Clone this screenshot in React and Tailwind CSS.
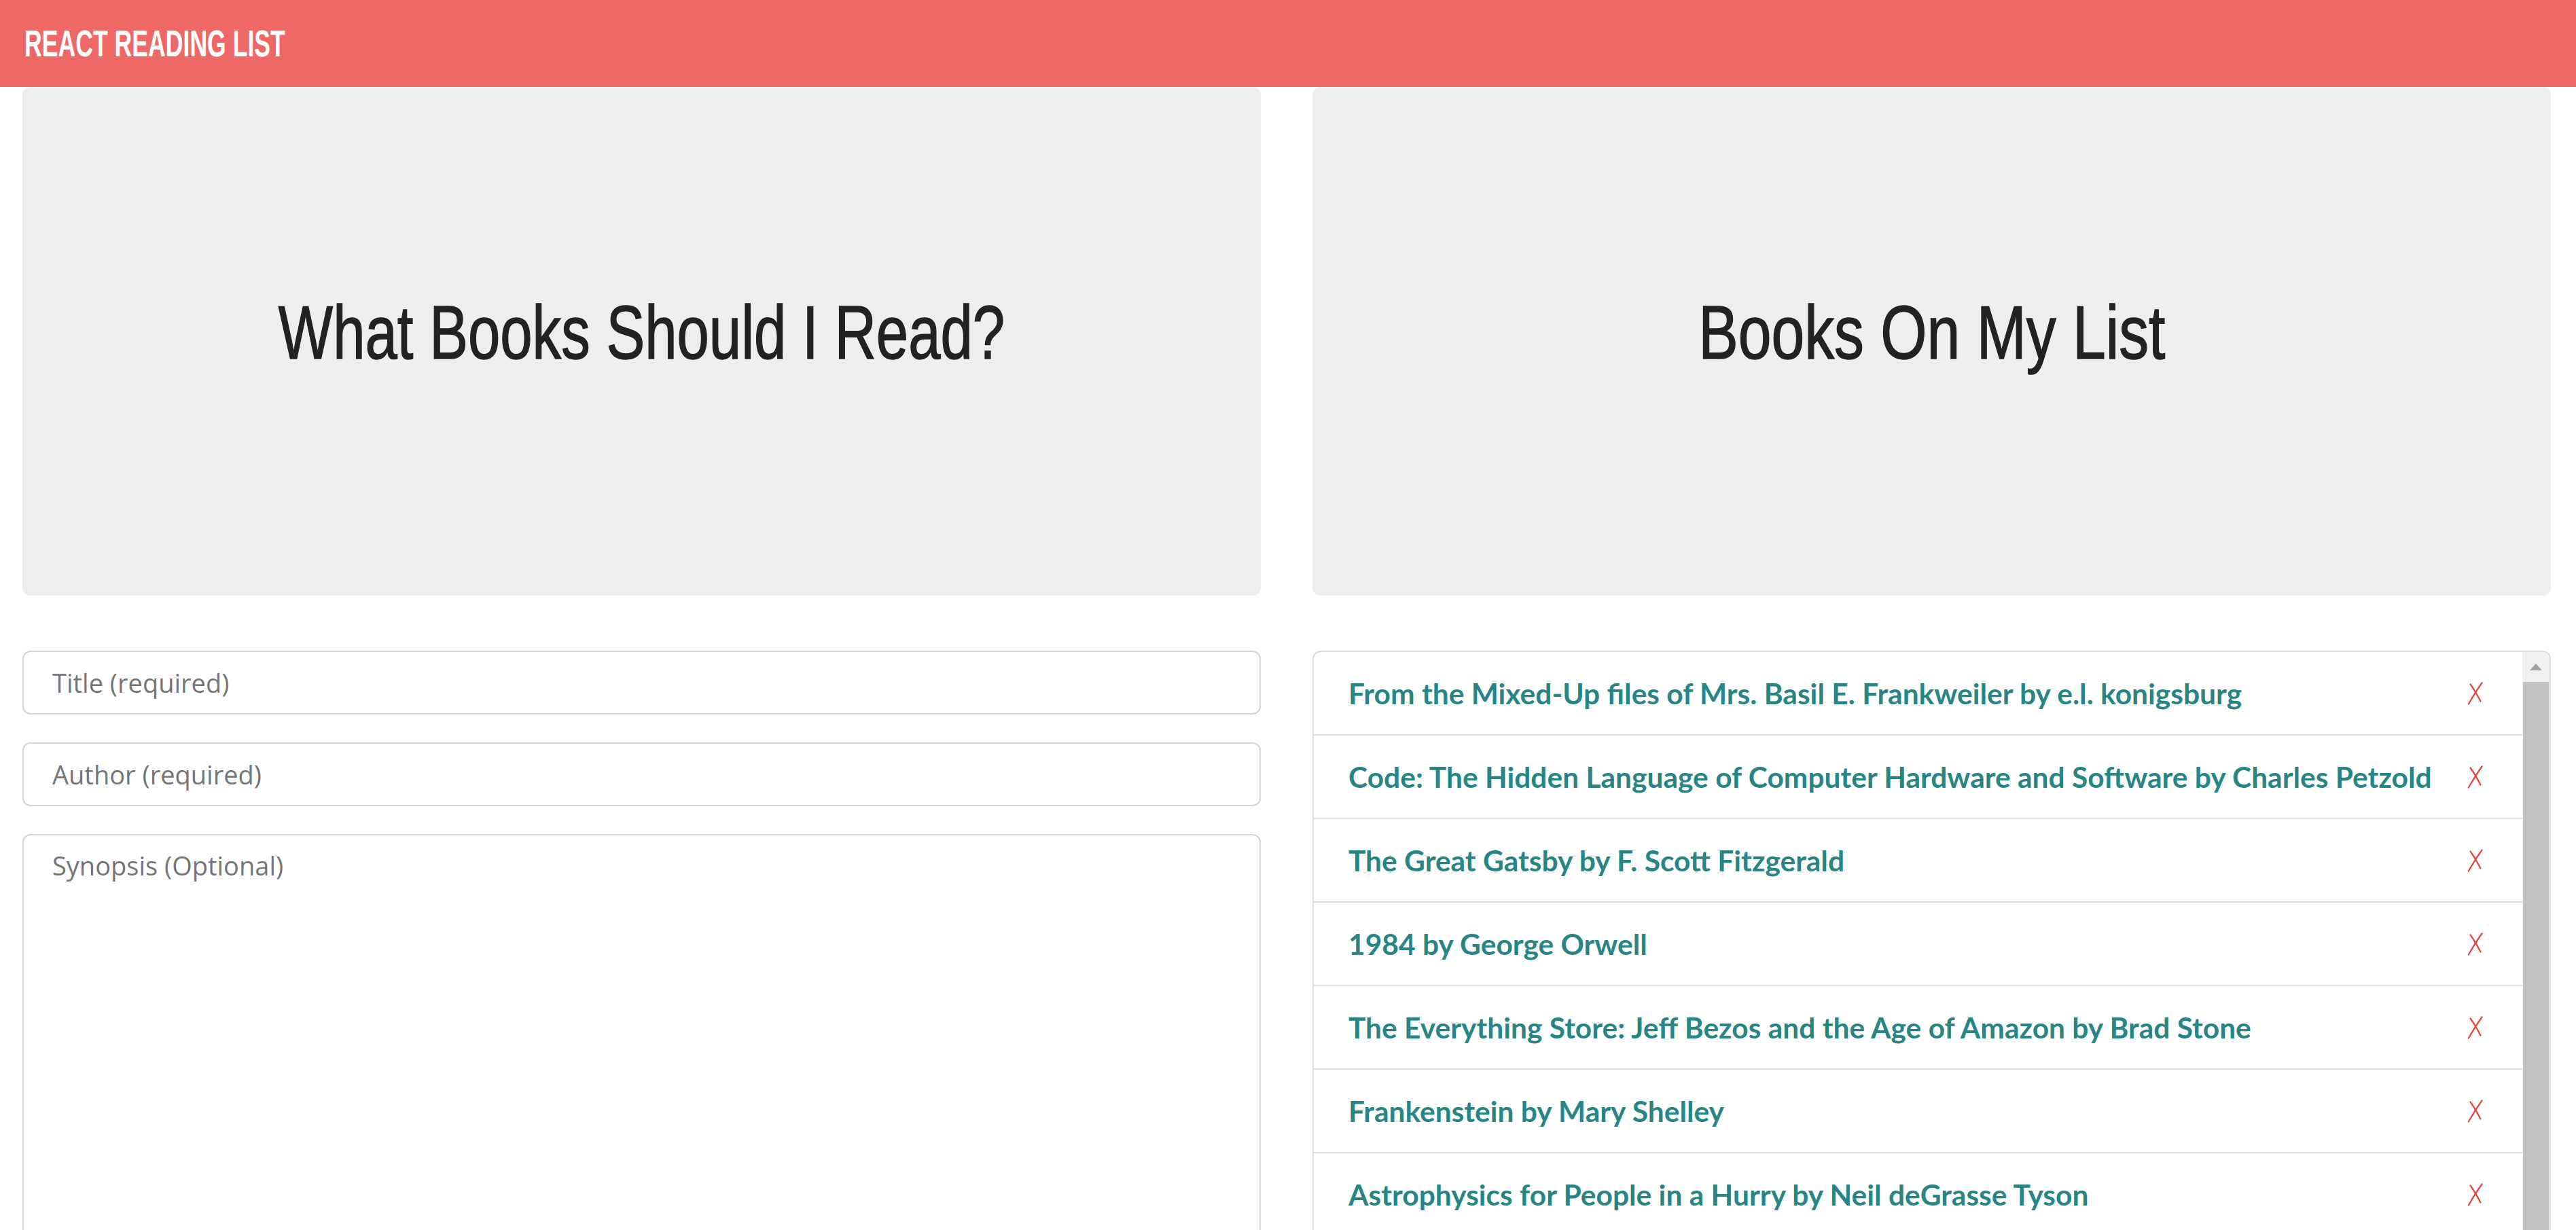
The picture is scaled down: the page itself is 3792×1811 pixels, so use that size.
import React from "react";

const books = [
  "From the Mixed-Up files of Mrs. Basil E. Frankweiler by e.l. konigsburg",
  "Code: The Hidden Language of Computer Hardware and Software by Charles Petzold",
  "The Great Gatsby by F. Scott Fitzgerald",
  "1984 by George Orwell",
  "The Everything Store: Jeff Bezos and the Age of Amazon by Brad Stone",
  "Frankenstein by Mary Shelley",
  "Astrophysics for People in a Hurry by Neil deGrasse Tyson",
];

function RemoveIcon() {
  return (
    <svg width="24" height="34" viewBox="0 0 24 34" className="shrink-0">
      <path d="M21.5 1.5 Q12 15 1.8 32.5" stroke="#e5453e" strokeWidth="2.2" fill="none" strokeLinecap="round" />
      <path d="M4.5 3.5 Q12 14 19.5 28.5" stroke="#e5453e" strokeWidth="2.2" fill="none" strokeLinecap="round" />
    </svg>
  );
}

export default function App() {
  return (
    <div className="w-full h-[1811px] overflow-hidden bg-white">
      <header className="h-[128px] bg-[#ee6966] flex items-center pl-[36px]">
        <span className="inline-block origin-left scale-x-[0.636] text-white text-[56px] leading-none font-bold font-['Liberation_Sans',sans-serif] whitespace-nowrap">
          REACT READING LIST
        </span>
      </header>
      <main className="pl-[33px] pr-[37px] grid grid-cols-2 gap-x-[76px]">
        <section className="flex flex-col">
          <div className="h-[749px] bg-[#eeeeee] rounded-[12px] flex items-center justify-center">
            <h1 className="inline-block scale-x-[0.76] text-[#222222] text-[112px] leading-none font-['Liberation_Sans',sans-serif] [-webkit-text-stroke:1.5px_#222222] pb-[26px] whitespace-nowrap">
              What Books Should I Read?
            </h1>
          </div>
          <div className="mt-[81px] flex flex-col gap-[41px]">
            <input
              className="h-[94px] w-full border-2 border-[#d4d4d4] rounded-[12px] pl-[42px] text-[38px] font-['Open_Sans',sans-serif] placeholder:text-[#757575] outline-none"
              placeholder="Title (required)"
            />
            <input
              className="h-[94px] w-full border-2 border-[#d4d4d4] rounded-[12px] pl-[42px] text-[38px] font-['Open_Sans',sans-serif] placeholder:text-[#757575] outline-none"
              placeholder="Author (required)"
            />
            <textarea
              className="h-[700px] w-full border-2 border-[#d4d4d4] rounded-[12px] pl-[42px] pt-[16px] text-[38px] font-['Open_Sans',sans-serif] placeholder:text-[#757575] outline-none resize-none"
              placeholder="Synopsis (Optional)"
            />
          </div>
        </section>
        <section className="flex flex-col">
          <div className="h-[749px] bg-[#eeeeee] rounded-[12px] flex items-center justify-center">
            <h1 className="inline-block scale-x-[0.783] text-[#222222] text-[112px] leading-none font-['Liberation_Sans',sans-serif] [-webkit-text-stroke:1.5px_#222222] pb-[26px] whitespace-nowrap">
              Books On My List
            </h1>
          </div>
          <div className="mt-[81px] border-2 border-[#dddddd] rounded-[12px] flex h-[900px] overflow-hidden">
            <ul className="flex-1 flex flex-col">
              {books.map((b) => (
                <li
                  key={b}
                  className="h-[123px] shrink-0 border-b-2 border-[#dddddd] flex items-center justify-between pl-[51px] pr-[57px]"
                >
                  <span className="text-[#288586] text-[42.5px] font-bold font-['Lato',sans-serif] whitespace-nowrap">
                    {b}
                  </span>
                  <RemoveIcon />
                </li>
              ))}
            </ul>
            <div className="w-[40px] bg-[#f1f1f1] flex flex-col">
              <div className="h-[44px] flex items-center justify-center">
                <svg width="20" height="12" viewBox="0 0 20 12">
                  <polygon points="10,1 19,11 1,11" fill="#a3a3a3" />
                </svg>
              </div>
              <div className="flex-1 bg-[#c1c1c1] mx-[1px]" />
            </div>
          </div>
        </section>
      </main>
    </div>
  );
}
